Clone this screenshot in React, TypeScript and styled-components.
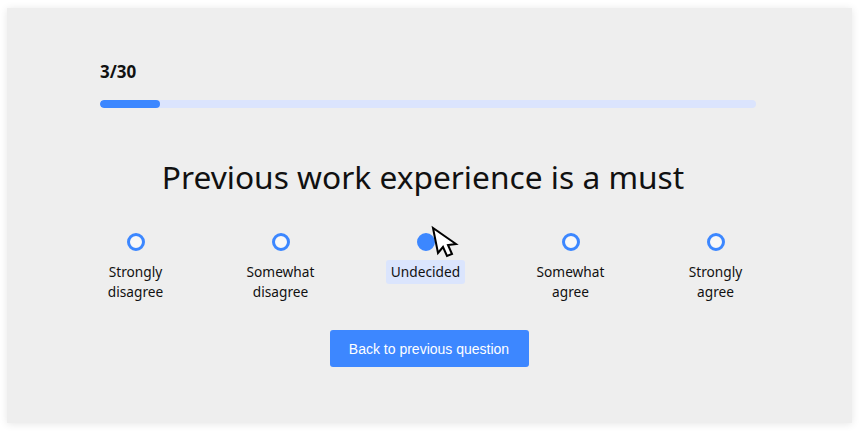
import React from "react";
import styled, { createGlobalStyle } from "styled-components";

const GlobalStyle = createGlobalStyle`
  html, body { margin: 0; padding: 0; background: #ffffff; }
  body { font-family: "Noto Sans", "Open Sans", sans-serif; color: #111; }
`;

const Page = styled.div`
  padding: 8px 12px 19px 7px;
`;

const Card = styled.div`
  position: relative;
  height: 415px;
  box-sizing: border-box;
  background: #eeeeee;
  box-shadow: 0 1px 8px rgba(0, 0, 0, 0.1);
  padding: 54px 96px 0 93px;
  display: flex;
  flex-direction: column;
`;

const Counter = styled.div`
  font-size: 17px;
  line-height: 20px;
  font-weight: 700;
  color: #111;
`;

const Track = styled.div`
  margin-top: 18px;
  height: 8px;
  border-radius: 4px;
  background: #dbe4fd;
  overflow: hidden;
`;

const Fill = styled.div`
  height: 100%;
  border-radius: 4px;
  background: #3c87ff;
`;

const Title = styled.h1`
  margin: 49px 0 0 -10px;
  font-size: 31.7px;
  line-height: 40px;
  font-weight: 400;
  text-align: center;
  color: #111;
`;

const Options = styled.div`
  margin: 36px 0 0 -37px;
  display: grid;
  grid-template-columns: repeat(5, 145px);
`;

const Option = styled.div`
  display: flex;
  flex-direction: column;
  align-items: center;
`;

const Radio = styled.span<{ $checked?: boolean }>`
  width: 18px;
  height: 18px;
  box-sizing: border-box;
  border-radius: 50%;
  border: 3px solid #3c87ff;
  background: ${(p) => (p.$checked ? "#3c87ff" : "#f8f8f8")};
`;

const Label = styled.span<{ $active?: boolean }>`
  margin-top: 9px;
  padding: 2px 5px;
  font-size: 13.7px;
  line-height: 20px;
  text-align: center;
  color: #111;
  border-radius: 3px;
  background: ${(p) => (p.$active ? "#dbe5fd" : "transparent")};
`;

const Actions = styled.div`
  margin-top: 26px;
  display: flex;
  justify-content: center;
  padding-left: 2px;
`;

const Button = styled.button`
  width: 199px;
  height: 37px;
  border: none;
  border-radius: 3px;
  background: #3d87ff;
  color: #ffffff;
  font-family: "Liberation Sans", Arial, sans-serif;
  font-size: 14px;
  cursor: pointer;
`;

const Cursor = styled.svg`
  position: absolute;
  left: 423px;
  top: 217px;
  pointer-events: none;
`;

const options = [
  ["Strongly", "disagree"],
  ["Somewhat", "disagree"],
  ["Undecided"],
  ["Somewhat", "agree"],
  ["Strongly", "agree"],
];

export default function App() {
  const current = 3;
  const total = 30;
  const pct = (60 / 656) * 100;
  return (
    <>
      <GlobalStyle />
      <Page>
        <Card>
          <Counter>
            {current}/{total}
          </Counter>
          <Track>
            <Fill style={{ width: `${pct}%` }} />
          </Track>
          <Title>Previous work experience is a must</Title>
          <Options>
            {options.map((lines, i) => (
              <Option key={i}>
                <Radio $checked={i === 2} />
                <Label $active={i === 2}>
                  {lines.map((l, j) => (
                    <React.Fragment key={j}>
                      {j > 0 && <br />}
                      {l}
                    </React.Fragment>
                  ))}
                </Label>
              </Option>
            ))}
          </Options>
          <Actions>
            <Button>Back to previous question</Button>
          </Actions>
          <Cursor width="40" height="45" viewBox="0 0 40 45">
            <polygon
              points="3,3 8,28 13,22 17,31 22,29 18,20 26,19"
              fill="#ffffff"
              stroke="#000000"
              strokeWidth="2"
              strokeLinejoin="miter"
            />
          </Cursor>
        </Card>
      </Page>
    </>
  );
}
